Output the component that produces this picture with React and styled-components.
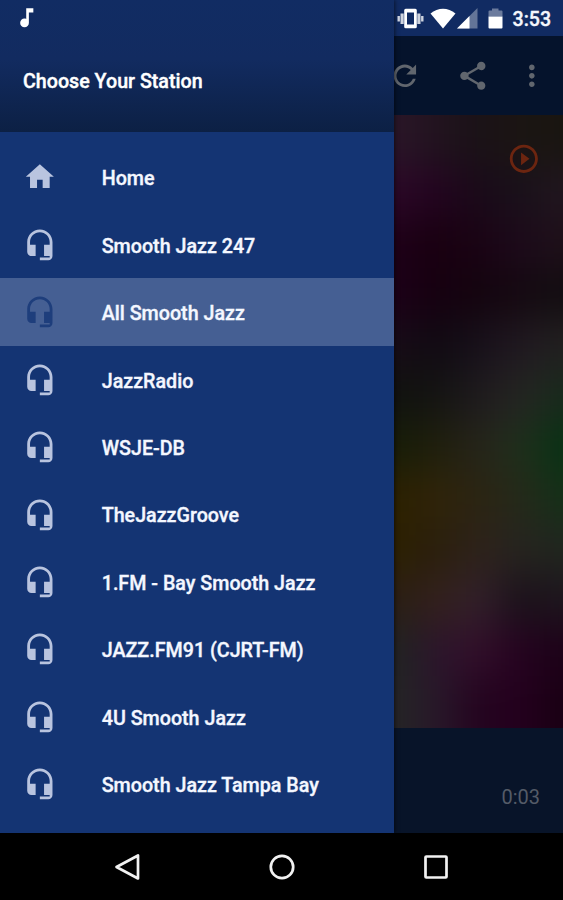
import React from "react";
import styled, { createGlobalStyle } from "styled-components";

const GlobalStyle = createGlobalStyle`
  body {
    margin: 0;
    background: #000;
    font-family: Roboto, "Noto Sans", sans-serif;
  }
`;

const Phone = styled.div`
  position: relative;
  display: flex;
  flex-direction: column;
  width: 563px;
  height: 900px;
  overflow: hidden;
  background: #000;
`;

const StatusBar = styled.header`
  position: relative;
  z-index: 2;
  display: flex;
  align-items: center;
  flex: none;
  box-sizing: border-box;
  height: 36px;
  padding: 0 11px 0 14px;
`;

const StatusBackdrop = styled.div`
  position: absolute;
  inset: 0 0 auto 0;
  height: 36px;
  background: #112b62;
`;

const StatusIcons = styled.div`
  display: flex;
  align-items: center;
  margin-left: auto;
  height: 36px;
`;

const Clock = styled.time`
  margin-left: 9.5px;
  padding-top: 3px;
  width: 39.5px;
  color: #f4f6fc;
  font-size: 19.6px;
  font-weight: 500;
  line-height: 36px;
  white-space: nowrap;
  -webkit-text-stroke: 0.35px currentColor;
`;

const Glyph = styled.svg`
  position: relative;
  display: block;
  flex: none;
  width: ${(p) => p.$w || 33.7}px;
  height: ${(p) => p.$h || p.$w || 33.7}px;
  margin-left: ${(p) => p.$gap || 0}px;
  fill: ${(p) => p.$color || "#fff"};
`;

const Toolbar = styled.div`
  display: flex;
  align-items: center;
  justify-content: flex-end;
  flex: none;
  box-sizing: border-box;
  height: 79px;
  padding: 0 14px 0 0;
  background: #05132c;
`;

const Artwork = styled.div`
  position: relative;
  display: flex;
  justify-content: flex-end;
  align-items: flex-start;
  flex: none;
  box-sizing: border-box;
  height: 612.5px;
  padding: 27px 22.5px 0 0;
  overflow: hidden;
  background: #1c151a;
`;

const BlurredCover = styled.svg`
  position: absolute;
  top: 0;
  right: 0;
  width: 169px;
  height: 613px;
`;

const Player = styled.div`
  display: flex;
  align-items: center;
  justify-content: flex-end;
  flex: 1;
  box-sizing: border-box;
  padding: 33px 23px 0 0;
  background: #081429;
  color: #545b67;
  font-size: 20px;
`;

const Drawer = styled.aside`
  position: absolute;
  left: 0;
  top: 0;
  display: flex;
  flex-direction: column;
  width: 394px;
  height: 833px;
  background: #143473;
  box-shadow: 1px 0 4px #0008;
`;

const DrawerHeader = styled.div`
  display: flex;
  align-items: center;
  flex: none;
  box-sizing: border-box;
  height: 132px;
  padding: 31px 0 0 23px;
  background: linear-gradient(#112c63 0, #122b60 45%, #0c2044 100%);
  color: #fff;
  font-size: 19.66px;
  font-weight: 500;
  -webkit-text-stroke: 0.4px currentColor;
`;

const StationList = styled.ul`
  margin: 0;
  padding: 11.5px 0 0;
  list-style: none;
`;

const StationRow = styled.li`
  display: flex;
  align-items: center;
  gap: 45px;
  height: 67.45px;
  padding-left: 23px;
  background: ${(p) => (p.$active ? "#455f93" : "transparent")};
  color: #f4f7ff;
  font-size: 19.7px;
  font-weight: 500;
  white-space: nowrap;
  -webkit-text-stroke: 0.35px currentColor;
`;

const StationName = styled.span`
  padding-top: 3px;
`;

const NavBar = styled.nav`
  display: grid;
  grid-template-columns: repeat(3, 154.5px);
  justify-content: center;
  justify-items: center;
  align-items: center;
  flex: none;
  height: 67px;
  background: #000;
`;

const NavGlyph = styled.svg`
  width: 32px;
  height: 32px;
  fill: none;
  stroke: #f2f2f2;
  stroke-width: 2.7;
  stroke-linejoin: round;
`;

const HOME = "M10 20v-6h4v6h5v-8h3L12 3 2 12h3v8z";
const HEADSET =
  "M12 1c-4.97 0-9 4.03-9 9v7c0 1.66 1.34 3 3 3h3v-8H5v-2c0-3.87 3.13-7 7-7s7 3.13 7 7v2h-4v8h4v1h-7v2h6c1.66 0 3-1.34 3-3V10c0-4.97-4.03-9-9-9z";
const REFRESH =
  "M17.65 6.35C16.2 4.9 14.21 4 12 4c-4.42 0-7.99 3.58-7.99 8s3.57 8 7.99 8c3.73 0 6.84-2.55 7.73-6h-2.08c-.82 2.33-3.04 4-5.65 4-3.31 0-6-2.69-6-6s2.69-6 6-6c1.66 0 3.14.69 4.22 1.78L13 11h7V4l-2.35 2.35z";
const SHARE =
  "M18 16.08c-.76 0-1.44.3-1.96.77L8.91 12.7c.05-.23.09-.46.09-.7s-.04-.47-.09-.7l7.05-4.11c.54.5 1.25.81 2.04.81 1.66 0 3-1.34 3-3s-1.34-3-3-3-3 1.34-3 3c0 .24.04.47.09.7L8.04 9.81C7.5 9.31 6.79 9 6 9c-1.66 0-3 1.34-3 3s1.34 3 3 3c.79 0 1.5-.31 2.04-.81l7.12 4.16c-.05.21-.08.43-.08.65 0 1.61 1.31 2.92 2.92 2.92s2.92-1.31 2.92-2.92-1.31-2.92-2.92-2.92z";
const MORE =
  "M12 8c1.1 0 2-.9 2-2s-.9-2-2-2-2 .9-2 2 .9 2 2 2zm0 2c-1.1 0-2 .9-2 2s.9 2 2 2 2-.9 2-2-.9-2-2-2zm0 6c-1.1 0-2 .9-2 2s.9 2 2 2 2-.9 2-2-.9-2-2-2z";
const PLAY =
  "M10 16.5l6-4.5-6-4.5v9zM12 2C6.48 2 2 6.48 2 12s4.48 10 10 10 10-4.48 10-10S17.52 2 12 2zm0 18c-4.41 0-8-3.59-8-8s3.59-8 8-8 8 3.59 8 8-3.59 8-8 8z";
const NOTE =
  "M11.5 3v10.2c-.5-.25-1-.4-1.6-.4-2.3 0-4.1 1.8-4.1 4.1s1.8 4.1 4.1 4.1 4.1-1.8 4.1-4.1V7h4.2V3h-6.7z";

// Colours of the blurred album cover, sampled as a coarse grid (rows top to bottom).
const COVER = [
  ["#2a1628", "#22131f", "#1a1217", "#1b1513", "#191510"],
  ["#2b0827", "#230420", "#1a0a19", "#19111a", "#21161f"],
  ["#1e0018", "#190010", "#1a0314", "#1d0a1b", "#1e1019"],
  ["#1c0018", "#160010", "#14040f", "#150911", "#120d11"],
  ["#180c18", "#100a12", "#17101a", "#201820", "#222020"],
  ["#10120f", "#141412", "#1e1a1e", "#252522", "#182a1c"],
  ["#171d08", "#1f1f0c", "#26241a", "#1f2f1c", "#083214"],
  ["#2c2000", "#302409", "#2b2412", "#25291a", "#143018"],
  ["#2d2000", "#2a1f0c", "#2e221a", "#262420", "#20261f"],
  ["#2a1e14", "#33201c", "#32202b", "#1b111a", "#1e161e"],
  ["#202422", "#2c152c", "#320f2a", "#250320", "#1d0218"],
  ["#242525", "#28182a", "#24041f", "#24001e", "#190013"],
];
const CELL_W = 42;
const CELL_H = 51;

function Cover() {
  return (
    <BlurredCover viewBox="0 0 169 613" aria-hidden="true">
      <defs>
        <filter id="soften" x="-120" y="-100" width="410" height="813" filterUnits="userSpaceOnUse" colorInterpolationFilters="sRGB">
          <feGaussianBlur stdDeviation="19" />
        </filter>
      </defs>
      <g filter="url(#soften)">
        {COVER.map((row, r) =>
          row.map((color, c) => {
            const left = c === 0 ? -110 : c * CELL_W - 21;
            const right = c === row.length - 1 ? 280 : c * CELL_W + 22;
            const top = r === 0 ? -90 : r * CELL_H;
            const bottom = r === COVER.length - 1 ? 700 : (r + 1) * CELL_H + 1;
            return (
              <rect key={`${r}-${c}`} x={left} y={top} width={right - left} height={bottom - top} fill={color} />
            );
          })
        )}
      </g>
    </BlurredCover>
  );
}

function MaterialIcon({ path, size, gap, color }) {
  return (
    <Glyph viewBox="0 0 24 24" $w={size} $gap={gap} $color={color} aria-hidden="true">
      <path d={path} />
    </Glyph>
  );
}

const STATIONS = [
  "Home",
  "Smooth Jazz 247",
  "All Smooth Jazz",
  "JazzRadio",
  "WSJE-DB",
  "TheJazzGroove",
  "1.FM - Bay Smooth Jazz",
  "JAZZ.FM91 (CJRT-FM)",
  "4U Smooth Jazz",
  "Smooth Jazz Tampa Bay",
];
const ACTIVE = "All Smooth Jazz";

function iconColor(name) {
  return name === ACTIVE ? "#1e3e7c" : "#b9c4df";
}

export default function App() {
  return (
    <Phone>
      <GlobalStyle />
      <StatusBackdrop />
      <StatusBar>
        <MaterialIcon path={NOTE} size={25.5} />
        <StatusIcons>
          <Glyph viewBox="0 0 27 21" $w={27} $h={21}>
            <path d="M0.5 8h2.4v5.6H0.5zM3.5 5.5h3.2v10.6H3.5zM20.3 5.5h3.2v10.6h-3.2zM24.1 8h2.4v5.6h-2.4z" fillOpacity=".8" />
            <path fillRule="evenodd" d="M8.7 0.7h9.6q1.5 0 1.5 1.5v16.6q0 1.5-1.5 1.5H8.7q-1.5 0-1.5-1.5V2.2q0-1.5 1.5-1.5zM10 4.5v12h7v-12z" />
          </Glyph>
          <Glyph viewBox="0 0 26 21" $w={26} $h={21} $gap={6.5}>
            <path d="M0.5 5.5C8-1 18-1 25.5 5.5L13 20.5z" />
          </Glyph>
          <Glyph viewBox="0 0 21 21" $w={21} $h={21} $gap={1}>
            <path d="M0 20.5L20.5 0v20.5z" fillOpacity=".35" />
            <path d="M0 20.5L12.5 8v12.5z" />
          </Glyph>
          <Glyph viewBox="0 0 15 21" $w={15} $h={21} $gap={10}>
            <path d="M0.5 8.5V3.5q0-1 1-1H4V0.5h6.5v2H13.5q1 0 1 1v5z" fillOpacity=".38" />
            <path d="M0.5 8.5h14v11q0 1-1 1h-12q-1 0-1-1z" />
          </Glyph>
          <Clock>3:53</Clock>
        </StatusIcons>
      </StatusBar>
      <Toolbar>
        <MaterialIcon path={REFRESH} color="#61666e" />
        <MaterialIcon path={SHARE} gap={34} color="#61666e" />
        <MaterialIcon path={MORE} gap={25.5} color="#61666e" />
      </Toolbar>
      <Artwork>
        <Cover />
        <MaterialIcon path={PLAY} color="#6c2510" />
      </Artwork>
      <Player>0:03</Player>
      <NavBar>
        <NavGlyph viewBox="0 0 32 32">
          <path d="M27 4.5v23L5.5 16z" />
        </NavGlyph>
        <NavGlyph viewBox="0 0 32 32">
          <circle cx="16" cy="16" r="11.2" />
        </NavGlyph>
        <NavGlyph viewBox="0 0 32 32">
          <rect x="5.5" y="5.5" width="21" height="21" rx=".8" />
        </NavGlyph>
      </NavBar>
      <Drawer>
        <DrawerHeader>Choose Your Station</DrawerHeader>
        <StationList>
          {STATIONS.map((name) => (
            <StationRow key={name} $active={name === ACTIVE}>
              <MaterialIcon path={name === "Home" ? HOME : HEADSET} color={iconColor(name)} />
              <StationName>{name}</StationName>
            </StationRow>
          ))}
        </StationList>
      </Drawer>
    </Phone>
  );
}
